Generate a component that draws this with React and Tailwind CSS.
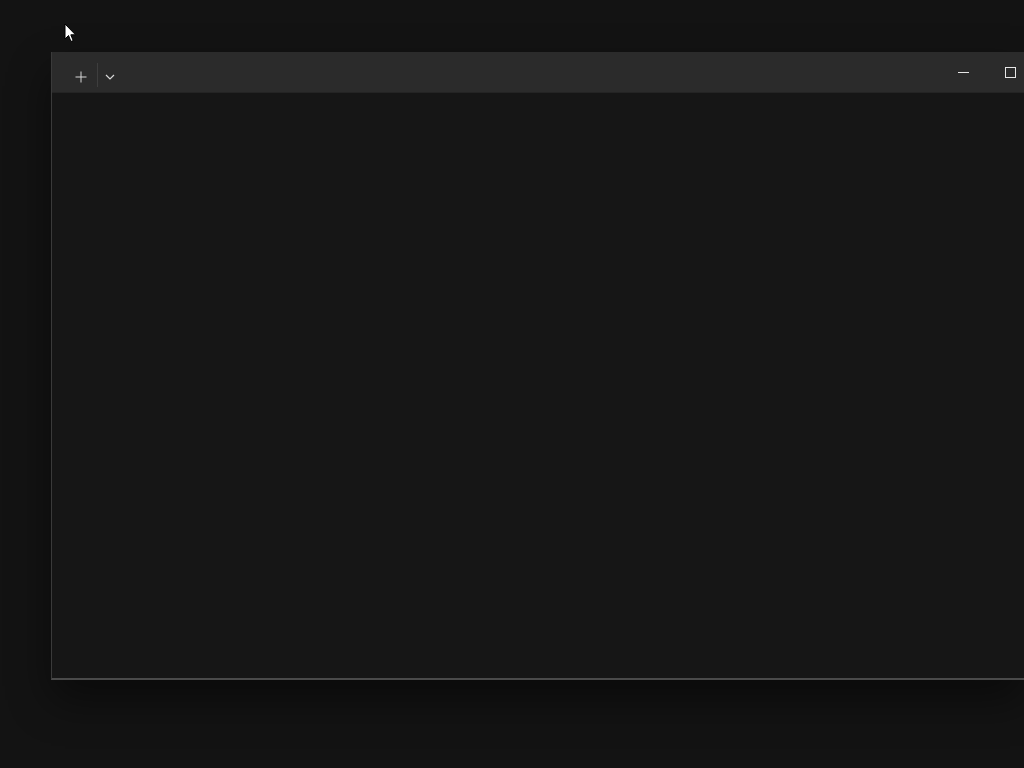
import React from "react";

export default function App() {
  return (
    <div className="relative w-[1024px] h-[768px] overflow-hidden bg-[#131313] pl-[51px] pt-[52px]">
      <div className="flex flex-col w-[973px] h-[628px] border-l border-b-2 border-l-[#3a3a3a] border-b-[#4a4a4a] shadow-[0_20px_40px_rgba(0,0,0,0.45)]">
        <div className="flex items-center h-[41px] bg-[#2b2b2b] border-b border-[#242424]">
          <div className="flex items-center pl-[24px]">
            <svg width="12" height="12" viewBox="0 0 12 12" className="mt-[10px] ml-[-1px]">
              <path d="M6 0.5V11.5M0.5 6H11.5" stroke="#d8d8d8" strokeWidth="1" />
            </svg>
            <div className="ml-[10px] w-px h-[24px] bg-[#3e3e3e] mt-[6px]" />
            <svg width="10" height="6" viewBox="0 0 10 6" className="ml-[7px] mt-[10px]">
              <path d="M1 1L5 5L9 1" stroke="#d8d8d8" strokeWidth="1.2" fill="none" />
            </svg>
          </div>
          <div className="ml-auto flex items-center mr-[8px]">
            <div className="w-[11px] h-px bg-[#e6e6e6]" />
            <div className="ml-[36px] w-[11px] h-[11px] border border-[#e6e6e6]" />
          </div>
        </div>
        <div className="flex-1 bg-[#161616]" />
      </div>
      <svg className="absolute left-[64px] top-[23px]" width="13" height="20" viewBox="0 0 13 20">
        <path d="M1 1V16L4.5 12.5L7 18.5L9.2 17.6L6.8 11.8H11.5Z" fill="#ffffff" stroke="#000" strokeWidth="1" strokeLinejoin="round" />
      </svg>
    </div>
  );
}
